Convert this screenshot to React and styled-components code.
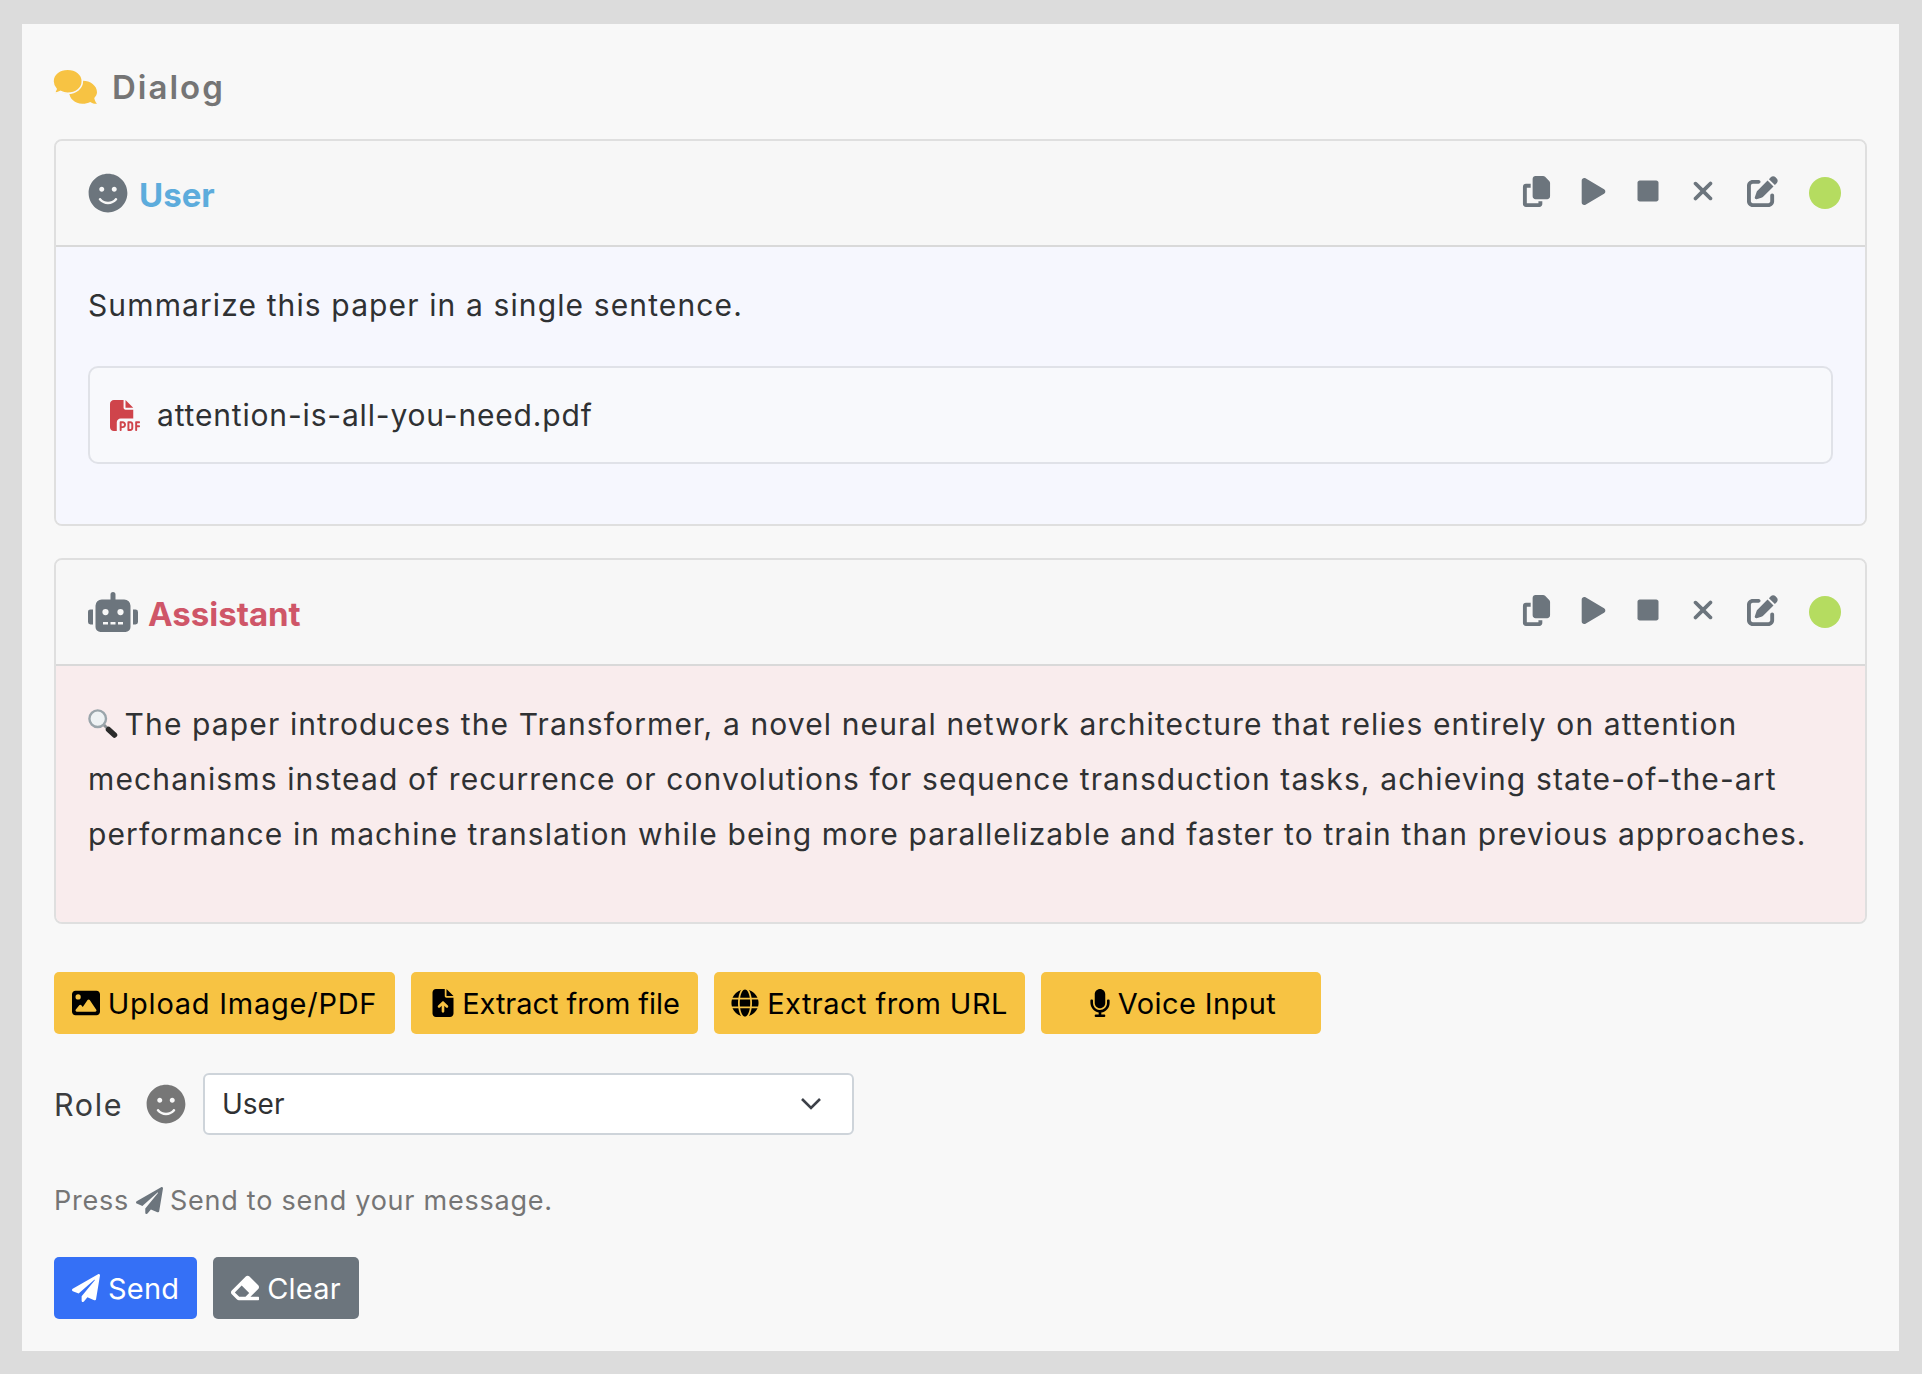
import React from "react";
import styled, { createGlobalStyle } from "styled-components";
import { FaSmile, FaRobot, FaPlay, FaStop, FaMicrophone, FaGlobe, FaPaperPlane, FaEraser } from "react-icons/fa";
import { FaCopy, FaImage, FaFileArrowUp, FaFilePdf, FaPenToSquare, FaXmark } from "react-icons/fa6";

const GlobalStyle = createGlobalStyle`
  body {
    margin: 0;
    background: #dcdcdc;
    font-family: "Inter", "Noto Sans", sans-serif;
    color: #2f3133;
  }
`;

const ChatBubbles = () => (
  <svg width="44" height="36" viewBox="0 0 42 34">
    <path
      d="M28.5 11C21.5 11 15.5 15.5 15.5 22C15.5 28 21 33 28 33C31 33 33.5 32.2 35.5 31.2C37.5 32.5 40 33.2 42 33C40.5 31.5 39.7 29.5 39.4 27.5C41 25.5 42 24 42 22C42 15.5 35.5 11 28.5 11Z"
      fill="#f7c343"
    />
    <path
      d="M14 0C6 0 0 5 0 11.5C0 14.5 1.2 17 3 19C2.7 20.5 1.5 22 0 23C2.7 23.2 5.2 22.4 7.2 21.2C9.2 22.3 11.5 23 14 23C22 23 28 18 28 11.5C28 5 22 0 14 0Z"
      fill="#f7c343"
      stroke="#f8f8f8"
      strokeWidth="1.5"
    />
  </svg>
);

const MagnifierEmoji = () => (
  <Emoji viewBox="0 0 30 30">
    <path d="M16 16l4 4" stroke="#8a9094" strokeWidth="3" />
    <path d="M20.5 20.5l6 5.5" stroke="#2b2b2b" strokeWidth="5.5" strokeLinecap="round" />
    <circle cx="9.7" cy="9.7" r="8.3" fill="#eef2f4" stroke="#9aa5ab" strokeWidth="2.4" />
  </Emoji>
);

const Toolbar = () => (
  <Tools>
    <ToolSlot $w={58}><FaCopy size={31} /></ToolSlot>
    <ToolSlot $w={56}><FaPlay size={27} /></ToolSlot>
    <ToolSlot $w={54}><FaStop size={24} /></ToolSlot>
    <ToolSlot $w={56}><FaXmark size={30} /></ToolSlot>
    <ToolSlot $w={62}><FaPenToSquare size={31} /></ToolSlot>
    <StatusDot />
  </Tools>
);

const App = () => {
  return (
    <Page>
      <GlobalStyle />
      <Panel>
        <Heading>
          <ChatBubbles />
          <span>Dialog</span>
        </Heading>

        <Card>
          <CardHeader>
            <RoleTitle $color="#5dacdc" $gap={11}>
              <FaSmile size={40} color="#6c757d" />
              <RoleName>User</RoleName>
            </RoleTitle>
            <Toolbar />
          </CardHeader>
          <CardBody $bg="#f6f7fe" $h={277}>
            <Line>Summarize this paper in a single sentence.</Line>
            <FileBox>
              <FaFilePdf size={31} color="#cf444b" />
              <span>attention-is-all-you-need.pdf</span>
            </FileBox>
          </CardBody>
        </Card>

        <Card>
          <CardHeader>
            <RoleTitle $color="#cf5668" $gap={10}>
              <FaRobot size={50} color="#6c757d" />
              <RoleName>Assistant</RoleName>
            </RoleTitle>
            <Toolbar />
          </CardHeader>
          <CardBody $bg="#f9eced" $h={256}>
            <Line>
              <MagnifierEmoji /> The paper introduces the Transformer, a novel neural network
              architecture that relies entirely on attention mechanisms instead of recurrence or
              convolutions for sequence transduction tasks, achieving state-of-the-art performance
              in machine translation while being more parallelizable and faster to train than
              previous approaches.
            </Line>
          </CardBody>
        </Card>

        <ButtonRow>
          <ActionButton $w={341} $ls={0.75} $gap={8}><FaImage size={28} />Upload Image/PDF</ActionButton>
          <ActionButton $w={287} $ls={-0.05} $gap={5}><FaFileArrowUp size={28} />Extract from file</ActionButton>
          <ActionButton $w={311} $ls={0.45} $gap={8}><FaGlobe size={28} />Extract from URL</ActionButton>
          <ActionButton $w={280} $ls={0.42} $gap={4}><FaMicrophone size={28} />Voice Input</ActionButton>
        </ButtonRow>

        <RoleRow>
          <RoleLabel>Role</RoleLabel>
          <FaSmile size={40} color="#777" />
          <SelectBox>
            <span>User</span>
            <svg width="22" height="14" viewBox="0 0 22 14">
              <path d="M2 2l9 9 9-9" fill="none" stroke="#3c4048" strokeWidth="2.6" />
            </svg>
          </SelectBox>
        </RoleRow>

        <Hint>
          Press <FaPaperPlane size={27} color="#6c757d" /> Send to send your message.
        </Hint>

        <SendRow>
          <SolidButton $bg="#3570f6"><FaPaperPlane size={28} />Send</SolidButton>
          <SolidButton $bg="#6c757d"><FaEraser size={28} />Clear</SolidButton>
        </SendRow>
      </Panel>
    </Page>
  );
};

export default App;

// Styled Components
const Page = styled.div`
  padding: 24px 23px 23px 22px;
`;

const Panel = styled.div`
  background: #f8f8f8;
  height: 1327px;
  box-sizing: border-box;
  padding: 35px 32px 0;
`;

const Heading = styled.h2`
  display: flex;
  align-items: center;
  gap: 15px;
  height: 55px;
  margin: 0 0 25px;
  font-size: 33px;
  font-weight: 600;
  letter-spacing: 2px;
  color: #757575;

  svg {
    margin-left: -1px;
  }
`;

const Card = styled.div`
  border: 2px solid #dfdfdf;
  border-radius: 8px;
  margin-bottom: 32px;
  overflow: hidden;
`;

const CardHeader = styled.div`
  display: flex;
  align-items: center;
  justify-content: space-between;
  height: 106px;
  box-sizing: border-box;
  padding: 0 24px 0 32px;
  background: #f7f7f7;
  border-bottom: 2px solid #d9d9d9;
`;

const RoleTitle = styled.div`
  display: flex;
  align-items: center;
  gap: ${(p) => p.$gap}px;
  font-size: 33px;
  font-weight: 700;
  color: ${(p) => p.$color};
`;

const RoleName = styled.span`
  padding-top: 3px;
`;

const Tools = styled.div`
  display: flex;
  align-items: center;
  color: #6c757d;
`;

const ToolSlot = styled.div`
  display: flex;
  align-items: center;
  justify-content: center;
  width: ${(p) => p.$w}px;
  margin-top: -4px;
`;

const StatusDot = styled.div`
  width: 32px;
  height: 32px;
  margin-left: 16px;
  border-radius: 50%;
  background: #b5dc60;
`;

const CardBody = styled.div`
  background: ${(p) => p.$bg};
  min-height: ${(p) => p.$h}px;
  box-sizing: border-box;
  padding: 31px 32px 0;
`;

const Line = styled.div`
  font-size: 30px;
  line-height: 55px;
  letter-spacing: 1.12px;
  color: #2f3133;
`;

const Emoji = styled.svg`
  width: 30px;
  height: 30px;
  margin-right: -3px;
  vertical-align: -4px;
`;

const FileBox = styled.div`
  display: flex;
  align-items: center;
  gap: 16px;
  height: 98px;
  margin-top: 33px;
  box-sizing: border-box;
  padding: 0 20px;
  background: #f8f9fc;
  border: 2px solid #e0e2e8;
  border-radius: 10px;
  font-size: 30px;
  letter-spacing: 0.83px;
`;

const ButtonRow = styled.div`
  display: flex;
  gap: 16px;
  margin-top: 48px;
`;

const ActionButton = styled.button`
  display: flex;
  align-items: center;
  justify-content: center;
  gap: ${(p) => p.$gap}px;
  width: ${(p) => p.$w}px;
  height: 62px;
  padding: 0;
  border: none;
  border-radius: 5px;
  background: #f7c343;
  color: #000;
  font-family: inherit;
  font-size: 29px;
  letter-spacing: ${(p) => p.$ls}px;
`;

const RoleRow = styled.div`
  display: flex;
  align-items: center;
  gap: 24px;
  margin-top: 39px;
  font-size: 30.5px;
`;

const RoleLabel = styled.span`
  width: 68px;
  color: #3a3c3e;
  letter-spacing: 1.6px;
`;

const SelectBox = styled.div`
  display: flex;
  align-items: center;
  justify-content: space-between;
  width: 651px;
  height: 62px;
  margin-left: -7px;
  box-sizing: border-box;
  padding: 0 30px 0 17px;
  background: #fff;
  border: 2px solid #ced4da;
  border-radius: 6px;
  font-size: 28px;
  letter-spacing: 0;
  color: #2f3133;
`;

const Hint = styled.div`
  display: flex;
  align-items: center;
  gap: 7px;
  margin-top: 49px;
  height: 32px;
  font-size: 27px;
  letter-spacing: 0.75px;
  color: #757575;
`;

const SendRow = styled.div`
  display: flex;
  gap: 16px;
  margin-top: 41px;
`;

const SolidButton = styled.button`
  display: flex;
  align-items: center;
  gap: 8px;
  height: 62px;
  padding: 0 18px;
  border: none;
  border-radius: 5px;
  background: ${(p) => p.$bg};
  color: #fff;
  font-family: inherit;
  font-size: 29px;
  letter-spacing: 0.2px;
`;
